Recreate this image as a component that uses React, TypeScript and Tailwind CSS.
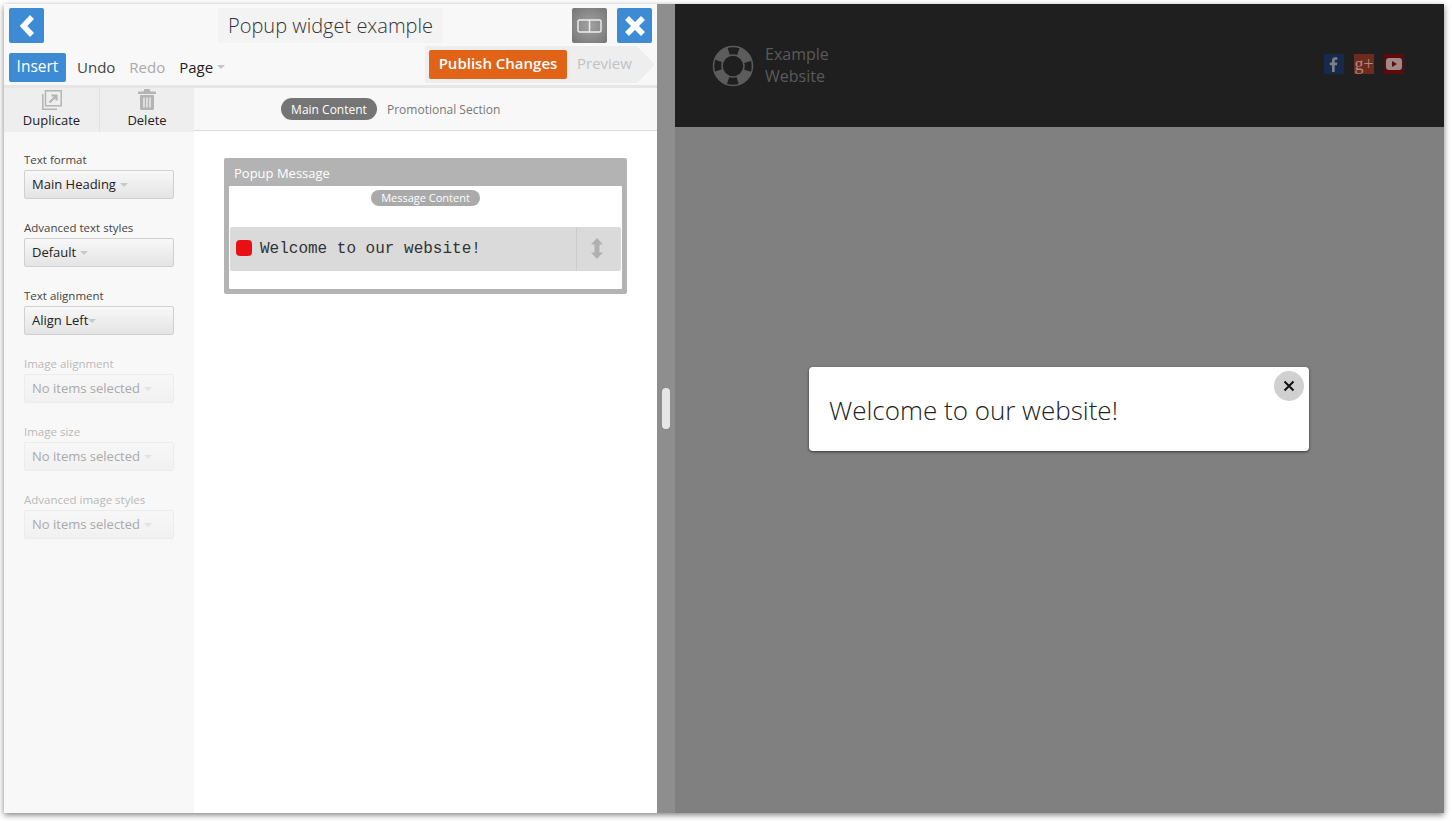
import React from "react";

const Caret = ({ className = "" }: { className?: string }) => (
  <svg width="8" height="4" viewBox="0 0 8 4" className={className}><path d="M0 0h8L4 4z" fill="currentColor" /></svg>
);

const Select = ({ label, value, disabled = false, gap = "ml-[4px]" }: { label: string; value: string; disabled?: boolean; gap?: string }) => (
  <div className="flex flex-col">
    <div className={`text-[11.5px] leading-[15px] h-[18px] ${disabled ? "text-[#b9b9b9]" : "text-[#444]"}`}>{label}</div>
    <div
      className={`w-[150px] h-[29px] rounded-[2px] border flex items-center pl-[7px] pt-[1px] text-[13px] ${
        disabled
          ? "border-[#ececec] bg-gradient-to-b from-[#f7f7f7] to-[#f1f1f1] text-[#a9a9a9]"
          : "border-[#d0d0d0] bg-gradient-to-b from-[#f8f8f8] to-[#e4e4e4] text-[#222]"
      }`}
    >
      {value}
      <Caret className={`${gap} ${disabled ? "text-[#e2e2e2]" : "text-[#c8c8c8]"}`} />
    </div>
  </div>
);

export default function App() {
  return (
    <div className="w-[1452px] h-[821px] bg-white overflow-hidden pt-[4px] pl-[4px] pr-[8px] pb-[8px] font-['Open_Sans',sans-serif]">
      <div className="w-full h-full flex shadow-[0_2px_6px_rgba(0,0,0,0.5)]">
        {/* Editor pane */}
        <div className="w-[653px] h-full flex flex-col bg-white shrink-0">
          <div className="h-[84px] bg-[#f8f8f8] border-b-[3px] border-[#e6e6e6] shrink-0 flex flex-col relative z-10">
            <div className="flex pt-[4px] pl-[5px] pr-[5px] h-[42px]">
              <div className="w-[35px] h-[35px] rounded-[2px] bg-[#3d8bd4] flex items-center justify-center">
                <svg width="18" height="22" viewBox="0 0 18 22"><path d="M14 2 5.500 11l8.500 9" stroke="#fff" strokeWidth="5.500" fill="none" /></svg>
              </div>
              <div className="ml-[174px] w-[225px] h-[35px] bg-[#f3f3f3] rounded-[2px] flex items-center justify-center text-[20px] font-light text-[#333] whitespace-nowrap">
                Popup widget example
              </div>
              <div className="ml-[129px] w-[35px] h-[35px] rounded-[2px] bg-[radial-gradient(circle,#a2a2a2,#757575)] flex items-center justify-center">
                <svg width="25" height="14" viewBox="0 0 25 14"><rect x="1" y="1" width="23" height="12" rx="1.5" fill="none" stroke="#eee" strokeWidth="1.4" /><path d="M12.5 1v12" stroke="#eee" strokeWidth="1.4" /></svg>
              </div>
              <div className="ml-[10px] w-[35px] h-[35px] rounded-[2px] bg-[#3d8bd4] flex items-center justify-center">
                <svg width="22" height="22" viewBox="0 0 22 22"><path d="M3 3l16 16M19 3 3 19" stroke="#fff" strokeWidth="5.5" fill="none" /></svg>
              </div>
            </div>
            <div className="flex items-start pl-[5px] h-[38px]">
              <div className="mt-[7px] w-[57px] h-[29px] bg-[#3d8bd4] rounded-[2px] text-white text-[15.500px] pb-[1px] flex items-center justify-center">Insert</div>
              <div className="mt-[7px] ml-[11px] h-[29px] pb-[1px] flex items-center text-[15px] text-[#444]">Undo</div>
              <div className="mt-[7px] ml-[14px] h-[29px] pb-[1px] flex items-center text-[15px] text-[#aaa]">Redo</div>
              <div className="mt-[7px] ml-[14px] h-[29px] pb-[1px] flex items-center text-[15px] text-[#222]">
                Page
                <Caret className="ml-[4px] text-[#c4c4c4]" />
              </div>
              <div className="ml-auto mr-[2px] w-[230px] h-[37px] bg-[#eeeeee] [clip-path:polygon(0_0,212px_0,100%_50%,212px_100%,0_100%)] flex items-center pl-[4px] pb-[1px]">
                <div className="w-[138px] h-[29px] bg-[#e06317] rounded-[2px] text-white text-[15px] font-semibold pb-[2px] flex items-center justify-center">Publish Changes</div>
                <div className="ml-[10px] text-[15px] text-[#c2c2c2] pb-[2px]">Preview</div>
              </div>
            </div>
          </div>

          <div className="flex-1 flex min-h-0">
            {/* Sidebar */}
            <div className="w-[190px] shrink-0 bg-[#f8f8f8] flex flex-col">
              <div className="h-[44px] flex bg-[#eeeeee] shrink-0">
                <div className="w-[96px] border-r border-[#e2e2e2] flex flex-col items-center">
                  <svg width="20" height="20" viewBox="0 0 20 20" className="mt-[2px] text-[#b4b4b4]" fill="none" stroke="currentColor">
                    <rect x="3.5" y="0.8" width="15.7" height="15" strokeWidth="1.5" />
                    <path d="M0.8 4v15.2H15" strokeWidth="1.5" />
                    <path d="M7.5 12.5 14 6M9.500 5.500h5v5" strokeWidth="2.2" />
                  </svg>
                  <div className="text-[13px] leading-[18px] mt-[1px] text-[#222]">Duplicate</div>
                </div>
                <div className="w-[94px] flex flex-col items-center">
                  <svg width="18" height="21" viewBox="0 0 18 21" className="mt-[1px] text-[#b4b4b4]" fill="currentColor">
                    <path d="M6.500 0h5l1 2.500H17a1 1 0 0 1 1 1V5H0V3.500a1 1 0 0 1 1-1h4.500zM2 6h14v13.500a1.500 1.500 0 0 1-1.500 1.500h-11A1.500 1.500 0 0 1 2 19.500z" />
                    <path d="M6 8.500v10M9 8.500v10M12 8.500v10" stroke="#eee" strokeWidth="1.400" />
                  </svg>
                  <div className="text-[13px] leading-[18px] mt-[1px] text-[#222]">Delete</div>
                </div>
              </div>
              <div className="pl-[20px] pt-[20px] flex flex-col gap-[21px]">
                <Select label="Text format" value="Main Heading" />
                <Select label="Advanced text styles" value="Default" />
                <Select label="Text alignment" value="Align Left" gap="ml-[0px]" />
                <Select label="Image alignment" value="No items selected" disabled />
                <Select label="Image size" value="No items selected" disabled />
                <Select label="Advanced image styles" value="No items selected" disabled />
              </div>
            </div>
            {/* Content */}
            <div className="flex-1 min-w-0 flex flex-col bg-white">
              <div className="h-[43px] bg-[#f8f8f8] border-b border-[#dcdcdc] flex items-center pl-[87px] shrink-0">
                <div className="h-[22px] w-[96px] rounded-full bg-[#757575] text-white text-[12px] pt-[1px] flex items-center justify-center">Main Content</div>
                <div className="ml-[10px] text-[12px] text-[#777] pt-[1px]">Promotional Section</div>
              </div>
              <div className="pt-[27px] pl-[30px]">
                <div className="w-[403px] h-[136px] bg-[#b3b3b3] rounded-[2px] flex flex-col px-[5px] pb-[5px]">
                  <div className="h-[28px] shrink-0 text-white text-[13px] flex items-center pt-[4px] pl-[5px]">Popup Message</div>
                  <div className="flex-1 bg-white rounded-[1px] flex flex-col items-center">
                    <div className="mt-[4px] h-[16px] w-[109px] rounded-full bg-[#aaaaaa] text-white text-[11px] flex items-center justify-center">Message Content</div>
                    <div className="mt-[21px] ml-[1px] mr-[1px] self-stretch h-[44px] bg-[#dadada] rounded-[2px] flex items-center">
                      <div className="ml-[6px] mb-[2px] w-[16px] h-[16px] rounded-[4px] bg-[#e81010]" />
                      <div className="ml-[8px] flex-1 font-['Liberation_Mono',monospace] text-[16px] text-[#333]">Welcome to our website!</div>
                      <div className="w-[45px] h-full border-l border-[#cccccc] flex items-center pl-[14px] pb-[2px]">
                        <svg width="12" height="21" viewBox="0 0 12 21" fill="#b0b0b0"><path d="M6 0l6 6.500H8.500v8H12L6 21l-6-6.500h3.500v-8H0z" /></svg>
                      </div>
                    </div>
                  </div>
                </div>
              </div>
            </div>
          </div>
        </div>

        {/* Divider */}
        <div className="w-[18px] h-full shrink-0 bg-[#8e8e8e] flex items-center pl-[5px]">
          <div className="w-[8px] h-[41px] rounded-full bg-[#e6e6e6]" />
        </div>

        {/* Preview pane */}
        <div className="flex-1 min-w-0 h-full flex flex-col bg-[#808080]">
          <div className="h-[123px] shrink-0 bg-[#1f1f1f] flex items-start relative">
            <svg width="42" height="42" viewBox="0 0 42 42" className="ml-[37px] mt-[41px] shrink-0">
              <circle cx="21" cy="21" r="19.500" fill="none" stroke="#5c5c5c" strokeWidth="1.500" />
              <circle cx="21" cy="21" r="11" fill="none" stroke="#5c5c5c" strokeWidth="1.500" />
              <circle cx="21" cy="21" r="15" fill="none" stroke="#5c5c5c" strokeWidth="9" strokeDasharray="14 9.560" strokeDashoffset="-4.780" />
            </svg>
            <div className="ml-[11px] mt-[39px] text-[16px] leading-[22px] text-[#5a5a5a]">Example<br />Website</div>
            <div className="ml-auto mr-[40px] mt-[50px] flex gap-[10px]">
              <div className="w-[20px] h-[20px] bg-[#17294d] flex items-center justify-center">
                <svg width="10" height="15" viewBox="0 0 10 15" fill="#7b7f88"><path d="M3 15V8.200H.8V5.600H3V3.700C3 1.400 4.300.3 6.300.3c1 0 1.800.1 2.100.1v2.400H7c-1.100 0-1.300.5-1.300 1.300v1.500h2.600l-.4 2.600H5.700V15z" /></svg>
              </div>
              <div className="w-[20px] h-[20px] bg-[#6e2a1e] flex items-center justify-center text-[#a98a84]">
                <span className="font-['Liberation_Serif',serif] text-[18px] leading-[16px]">g+</span>
              </div>
              <div className="w-[20px] h-[20px] bg-[#5f0a0a] flex items-center justify-center">
                <svg width="16" height="12" viewBox="0 0 16 12"><rect width="16" height="12" rx="3" fill="#9a8a8a" /><path d="M6 3l5 3-5 3z" fill="#5f0a0a" /></svg>
              </div>
            </div>
          </div>
          <div className="flex-1 flex justify-center pt-[240px] pr-[1px]">
            <div className="w-[500px] h-[84px] bg-white rounded-[4px] shadow-[0_1px_3px_rgba(0,0,0,0.6)] flex items-start relative pl-[20px] pt-[25px]">
              <div className="text-[26px] leading-[36px] font-light text-[#222]">Welcome to our website!</div>
              <div className="absolute top-[4px] right-[5px] w-[30px] h-[30px] rounded-full bg-[#d0d0d0] flex items-center justify-center">
                <svg width="12" height="12" viewBox="0 0 12 12"><path d="M1.500 1.500l9 9M10.500 1.500l-9 9" stroke="#111" strokeWidth="2" /></svg>
              </div>
            </div>
          </div>
        </div>
      </div>
    </div>
  );
}
